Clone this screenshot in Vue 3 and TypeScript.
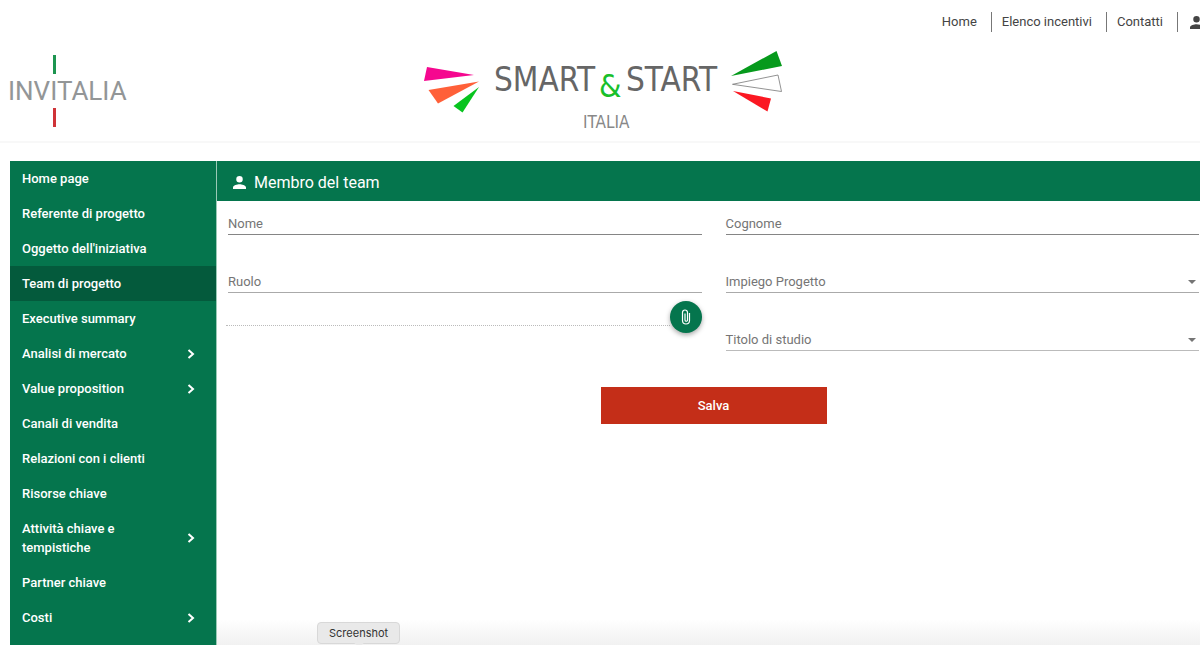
<script setup lang="ts">
import { reactive } from 'vue'

interface MenuItem {
  label: string
  active?: boolean
  expandable?: boolean
}

const menu: MenuItem[] = [
  { label: 'Home page' },
  { label: 'Referente di progetto' },
  { label: "Oggetto dell'iniziativa" },
  { label: 'Team di progetto', active: true },
  { label: 'Executive summary' },
  { label: 'Analisi di mercato', expandable: true },
  { label: 'Value proposition', expandable: true },
  { label: 'Canali di vendita' },
  { label: 'Relazioni con i clienti' },
  { label: 'Risorse chiave' },
  { label: 'Attività chiave e tempistiche', expandable: true },
  { label: 'Partner chiave' },
  { label: 'Costi', expandable: true },
]

const topLinks: string[] = ['Home', 'Elenco incentivi', 'Contatti']

const form = reactive({ nome: '', ruolo: '', cognome: '', impiego: '', titolo: '' })
</script>

<template>
  <div class="page">
    <header class="header">
      <nav class="top-nav">
        <a v-for="link in topLinks" :key="link" href="#">{{ link }}</a>
        <a href="#" class="account" aria-label="Account">
          <svg class="person" viewBox="4 4 16 16"><path d="M12 12a4 4 0 1 0 0-8 4 4 0 0 0 0 8zm0 2c-2.67 0-8 1.34-8 4v2h16v-2c0-2.66-5.33-4-8-4z" /></svg>
        </a>
      </nav>
      <div class="brands">
        <a href="#" class="invitalia">
          <span class="bar green"></span>
          <span class="word">INVITALIA</span>
          <span class="bar red"></span>
        </a>
        <svg class="smart" viewBox="420 48 366 86">
          <polygon points="427,67 424,81 474,75" fill="#f5078f" />
          <polygon points="428.500,90 438,103.500 479,81.500" fill="#ff6039" />
          <polygon points="453.500,106 462.500,112.500 479,87" fill="#08c41f" />
          <text x="494" y="91" class="caps">SMART</text>
          <text x="599" y="97" class="amp">&amp;</text>
          <text x="626" y="91" class="caps">START</text>
          <text x="583" y="128" class="sub">ITALIA</text>
          <polygon points="776.500,51 782,66 731,76" fill="#069a1c" />
          <polygon points="732.500,84.300 778,75 781.500,91.500" fill="#fff" stroke="#777" stroke-width=".8" />
          <polygon points="733,91 771,98.500 767.500,111.500" fill="#fb1822" />
        </svg>
      </div>
    </header>

    <div class="body">
      <nav class="sidebar">
        <a v-for="item in menu" :key="item.label" href="#" :class="{ active: item.active }">
          <span>{{ item.label }}</span>
          <svg v-if="item.expandable" class="chevron" viewBox="0 0 8 10"><path d="M1.500 1 6 5 1.500 9" /></svg>
        </a>
      </nav>

      <main class="content">
        <h1>
          <svg class="person" viewBox="4 4 16 16"><path d="M12 12a4 4 0 1 0 0-8 4 4 0 0 0 0 8zm0 2c-2.67 0-8 1.34-8 4v2h16v-2c0-2.66-5.33-4-8-4z" /></svg>
          Membro del team
        </h1>
        <form @submit.prevent>
          <div class="columns">
            <div class="column">
              <div class="field strong">
                <label for="nome">Nome</label>
                <input id="nome" v-model="form.nome" type="text" />
              </div>
              <div class="field">
                <label for="ruolo">Ruolo</label>
                <input id="ruolo" v-model="form.ruolo" type="text" />
              </div>
              <div class="upload">
                <span class="dots"></span>
                <button type="button" class="attach" aria-label="Allega file">
                  <svg viewBox="0 0 10 16"><path d="M8.500 4v7.500a3.500 3.500 0 0 1-7 0V3.500a2.500 2.500 0 0 1 5 0V11a1.250 1.250 0 0 1-2.500 0V4.500" /></svg>
                </button>
              </div>
            </div>
            <div class="column">
              <div class="field strong">
                <label for="cognome">Cognome</label>
                <input id="cognome" v-model="form.cognome" type="text" />
              </div>
              <div class="field">
                <label for="impiego">Impiego Progetto</label>
                <select id="impiego" v-model="form.impiego"><option value=""></option></select>
                <svg class="arrow" viewBox="0 0 8 4"><path d="M0 0h8L4 4z" /></svg>
              </div>
              <div class="field soft">
                <label for="titolo">Titolo di studio</label>
                <select id="titolo" v-model="form.titolo"><option value=""></option></select>
                <svg class="arrow" viewBox="0 0 8 4"><path d="M0 0h8L4 4z" /></svg>
              </div>
            </div>
          </div>
          <button type="submit" class="save">Salva</button>
        </form>
        <div class="fade"></div>
      </main>
    </div>
    <div class="tip" role="tooltip">Screenshot</div>
  </div>
</template>

<style>
body {
  margin: 0;
  background: #fff;
}
</style>

<style scoped>
.page {
  position: relative;
  display: flex;
  flex-direction: column;
  height: 100vh;
  overflow: hidden;
  font-family: Roboto, "Liberation Sans", sans-serif;
  font-size: 13px;
  color: #444;
}
a {
  color: inherit;
  text-decoration: none;
}
.header {
  flex: none;
  height: 141px;
  border-bottom: 2px solid #f8f8f8;
}
.top-nav {
  display: flex;
  justify-content: flex-end;
  align-items: center;
  height: 20px;
  padding-top: 12px;
  margin-right: -3px;
}
.top-nav a {
  padding: 0 14px 0 10px;
  line-height: 20px;
  border-right: 1px solid #777;
}
.top-nav .account {
  display: flex;
  align-items: center;
  height: 20px;
  padding: 0 0 0 12px;
  border: 0;
}
.person {
  flex: none;
  width: 13px;
  height: 13px;
  fill: currentColor;
}
.brands {
  display: grid;
  grid-template-columns: 1fr auto 1fr;
  align-items: center;
  padding: 16px 3px 0 8px;
}
.invitalia {
  justify-self: start;
  display: flex;
  flex-direction: column;
  color: #939697;
}
.word {
  font-size: 26px;
  line-height: 34px;
}
.bar {
  width: 3px;
  height: 19px;
  margin-left: 45px;
}
.bar.green {
  background: #1d9550;
}
.bar.red {
  background: #cf3338;
}
.smart {
  width: 366px;
  height: 86px;
  font-family: "Liberation Sans Narrow", "DejaVu Sans Condensed", Lato, sans-serif;
}
.caps {
  font-size: 33px;
  fill: #666;
}
.amp {
  font-size: 32px;
  fill: #18bf2b;
}
.sub {
  font-size: 17px;
  fill: #888;
}
.body {
  flex: 1;
  display: flex;
  min-height: 0;
  margin: 18px 0 0 10px;
}
.sidebar {
  flex: none;
  width: 206px;
  background: #05754d;
  border-right: 1px solid #9ac9b6;
  color: #fff;
  font-weight: 500;
}
.sidebar a {
  display: flex;
  align-items: center;
  justify-content: space-between;
  padding: 8px 21px 8px 12px;
  line-height: 19px;
}
.sidebar a span {
  max-width: 130px;
}
.sidebar .active {
  background: #045a3c;
}
.chevron {
  width: 8px;
  height: 10px;
  fill: none;
  stroke: #fff;
  stroke-width: 2;
}
.content {
  position: relative;
  flex: 1;
  min-width: 0;
}
h1 {
  display: flex;
  align-items: center;
  gap: 8px;
  height: 40px;
  box-sizing: border-box;
  margin: 0;
  padding: 2px 16px 0;
  background: #05754d;
  color: #fff;
  font-size: 16px;
  font-weight: 400;
}
form {
  padding: 8px 1px 0 11px;
}
.columns {
  display: grid;
  grid-template-columns: 1fr 1fr;
  gap: 24px;
}
.column {
  display: flex;
  flex-direction: column;
  gap: 32px;
}
.field {
  display: grid;
  align-items: center;
  height: 25px;
  border-bottom: 1px solid #aaa;
  color: #757575;
}
.field.strong {
  border-color: #858585;
}
.field.soft {
  border-color: #bbb;
}
.field > * {
  grid-area: 1 / 1;
}
.field label {
  padding-top: 4px;
  line-height: 20px;
  pointer-events: none;
  z-index: 1;
}
.field input,
.field select {
  width: 100%;
  height: 25px;
  box-sizing: border-box;
  padding: 0;
  border: 0;
  outline: 0;
  appearance: none;
  background: transparent;
  font: inherit;
}
.arrow {
  justify-self: end;
  width: 8px;
  height: 4px;
  margin: 4px 3px 0 0;
  fill: #757575;
  pointer-events: none;
}
.upload {
  display: flex;
  align-items: flex-start;
  height: 32px;
  margin: -24px 0 0 -2px;
}
.dots {
  flex: 1;
  height: 24px;
  border-bottom: 1px dotted #bbb;
}
.attach {
  display: flex;
  align-items: center;
  justify-content: center;
  width: 32px;
  height: 32px;
  padding: 0;
  border: 0;
  border-radius: 50%;
  background: #05754d;
  box-shadow: 0 2px 5px rgba(0, 0, 0, 0.35);
}
.attach svg {
  width: 10px;
  height: 16px;
  fill: none;
  stroke: #fff;
  stroke-width: 1.2;
}
.save {
  display: block;
  width: 226px;
  height: 37px;
  margin: 36px auto 0;
  padding: 0;
  border: 0;
  background: #c42e18;
  color: #fff;
  font: 500 13px Roboto, "Liberation Sans", sans-serif;
}
.fade {
  position: absolute;
  inset: auto 0 0;
  height: 26px;
  background: linear-gradient(#fff, #f1f1f1);
}
.tip {
  position: absolute;
  left: 317px;
  bottom: 1px;
  box-sizing: border-box;
  padding: 0 11px;
  border: 1px solid #d8d8d8;
  border-radius: 4px;
  background: #e9e9e9;
  color: #333;
  font: 11px/20px Inter, "Liberation Sans", sans-serif;
}
.tip::after {
  content: "";
  position: absolute;
  top: 100%;
  left: 50%;
  width: 8px;
  height: 8px;
  margin: -5px 0 0 -4px;
  background: #e9e9e9;
  transform: rotate(45deg);
}
</style>
